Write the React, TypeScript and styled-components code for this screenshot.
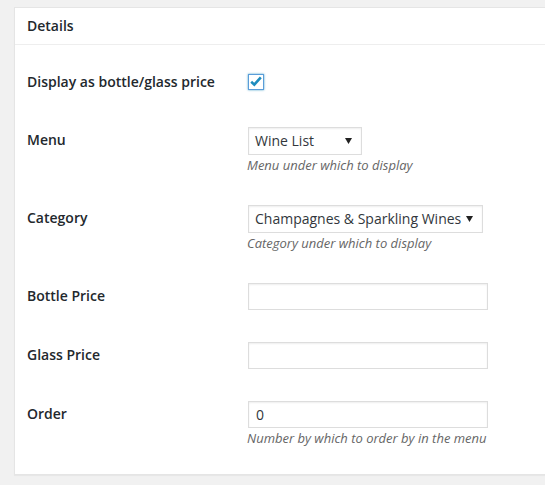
import React from "react";
import styled, { createGlobalStyle } from "styled-components";

const GlobalStyle = createGlobalStyle`
  html, body {
    margin: 0;
    padding: 0;
    background: #f1f1f1;
    overflow: hidden;
  }
  body {
    font-family: "Open Sans", "Liberation Sans", sans-serif;
    font-size: 14px;
    color: #444;
  }
`;

const Page = styled.div`
  padding: 7px 0 0 14px;
  width: 545px;
  height: 485px;
  box-sizing: border-box;
  overflow: hidden;
`;

const Panel = styled.div`
  background: #fff;
  border: 1px solid #e5e5e5;
  border-right: none;
  box-shadow: 0 1px 1px rgba(0, 0, 0, 0.04);
`;

const Header = styled.h2`
  margin: 0;
  padding: 8px 12px;
  font-size: 14px;
  font-weight: 600;
  line-height: 1.4;
  color: #23282d;
  border-bottom: 1px solid #eee;
`;

const Inside = styled.div`
  padding: 8px 12px 12px;
`;

const Row = styled.div`
  display: grid;
  grid-template-columns: 220px 1fr;
  align-items: start;
`;

const Label = styled.div`
  padding: 20px 0;
  line-height: 18px;
  font-weight: 600;
  color: #23282d;
`;

const Field = styled.div<{ $top?: number }>`
  padding: ${(p) => p.$top ?? 15}px 0 15px;
  display: flex;
  flex-direction: column;
  align-items: flex-start;
`;

const Checkbox = styled.span`
  margin-left: 1px;
  width: 16px;
  height: 16px;
  box-sizing: border-box;
  border: 1px solid #5b9dd9;
  box-shadow: 0 0 2px rgba(30, 140, 190, 0.8);
  background: #fff;
  display: flex;
  align-items: center;
  justify-content: center;
`;

const arrow =
  "url(\"data:image/svg+xml;utf8,<svg xmlns='http://www.w3.org/2000/svg' width='7' height='6'><path d='M0 0 L7 0 L3.5 6 Z' fill='%23222'/></svg>\")";

const Select = styled.div<{ $w: number }>`
  margin: 1px;
  width: ${(p) => p.$w}px;
  height: 28px;
  box-sizing: border-box;
  border: 1px solid #ddd;
  box-shadow: inset 0 1px 2px rgba(0, 0, 0, 0.07);
  padding: 0 22px 0 6px;
  display: flex;
  align-items: center;
  font-size: 14px;
  color: #32373c;
  background: #fff ${arrow} no-repeat right 9px center;
  white-space: nowrap;
`;

const TextInput = styled.div`
  margin: 1px;
  width: 240px;
  height: 27px;
  box-sizing: border-box;
  border: 1px solid #ddd;
  box-shadow: inset 0 1px 2px rgba(0, 0, 0, 0.07);
  padding: 0 7px;
  display: flex;
  align-items: center;
  font-size: 14px;
  color: #32373c;
  background: #fff;
`;

const Description = styled.p`
  margin: 1px 0 1px;
  font-size: 13px;
  line-height: 16px;
  font-style: italic;
  color: #666;
`;

const Check = () => (
  <svg width="12" height="11" viewBox="0 0 12 11">
    <path
      d="M1.2 5.8 L4.3 8.6 L10.8 1.4"
      fill="none"
      stroke="#1e8cbe"
      strokeWidth="2.6"
      strokeLinecap="butt"
      strokeLinejoin="miter"
    />
  </svg>
);

export default function App() {
  return (
    <>
      <GlobalStyle />
      <Page>
        <Panel>
          <Header>Details</Header>
          <Inside>
            <Row>
              <Label>Display as bottle/glass price</Label>
              <Field $top={21}>
                <Checkbox>
                  <Check />
                </Checkbox>
              </Field>
            </Row>
            <Row>
              <Label>Menu</Label>
              <Field>
                <Select $w={114}>Wine List</Select>
                <Description>Menu under which to display</Description>
              </Field>
            </Row>
            <Row>
              <Label>Category</Label>
              <Field>
                <Select $w={235}>Champagnes &amp; Sparkling Wines</Select>
                <Description>Category under which to display</Description>
              </Field>
            </Row>
            <Row>
              <Label>Bottle Price</Label>
              <Field>
                <TextInput />
              </Field>
            </Row>
            <Row>
              <Label>Glass Price</Label>
              <Field>
                <TextInput />
              </Field>
            </Row>
            <Row>
              <Label>Order</Label>
              <Field>
                <TextInput>0</TextInput>
                <Description>Number by which to order by in the menu</Description>
              </Field>
            </Row>
          </Inside>
        </Panel>
      </Page>
    </>
  );
}
